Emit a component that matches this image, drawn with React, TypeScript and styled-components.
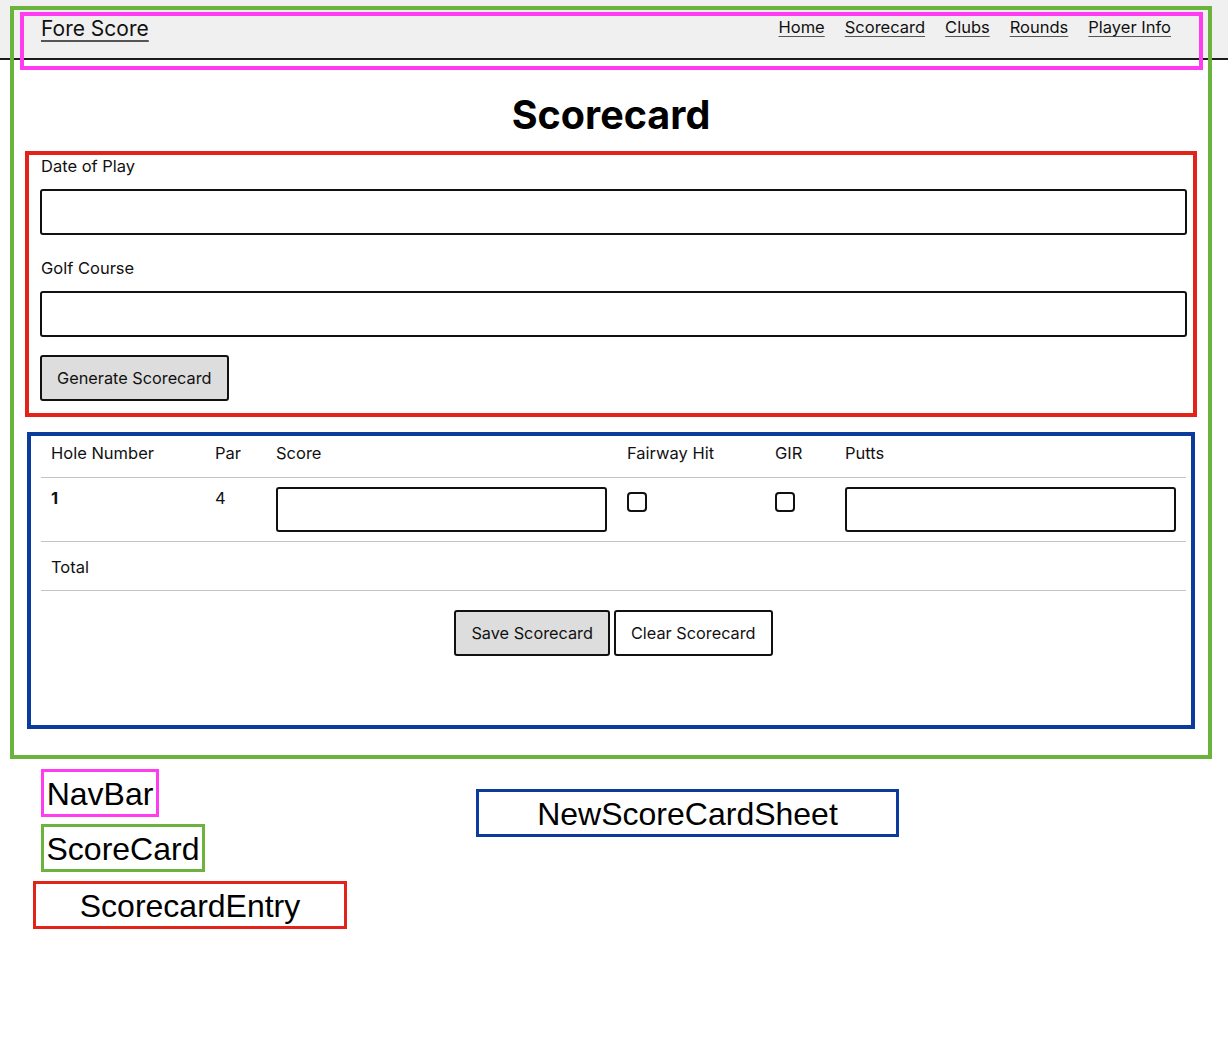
import styled, { createGlobalStyle } from 'styled-components'

const GlobalStyle = createGlobalStyle`
  * {
    box-sizing: border-box;
  }
  body {
    margin: 0;
    background: #ffffff;
    color: #111111;
    font-family: Inter, 'Noto Sans', sans-serif;
  }
`

const navLinks = ['Home', 'Scorecard', 'Clubs', 'Rounds', 'Player Info']

const columns = ['Hole Number', 'Par', 'Score', 'Fairway Hit', 'GIR', 'Putts']

const legendLeft = [
  { name: 'NavBar', color: '#ff3cf2', width: 118, indent: 41, top: 0 },
  { name: 'ScoreCard', color: '#6cb33e', width: 164, indent: 41, top: 7 },
  { name: 'ScorecardEntry', color: '#e2231a', width: 314, indent: 33, top: 9 }
]

function NavBar() {
  return (
    <Nav>
      <Brand href="#">Fore Score</Brand>
      <NavLinks>
        {navLinks.map((link) => (
          <NavLink key={link} href="#">
            {link}
          </NavLink>
        ))}
      </NavLinks>
    </Nav>
  )
}

function ScorecardEntry() {
  return (
    <EntryForm>
      <Label htmlFor="date">Date of Play</Label>
      <TextInput id="date" />
      <Label htmlFor="course" $gap={22}>
        Golf Course
      </Label>
      <TextInput id="course" />
      <ActionButton $filled type="button" $top={18}>
        Generate Scorecard
      </ActionButton>
    </EntryForm>
  )
}

function NewScoreCardSheet() {
  return (
    <Sheet>
      <HeaderRow>
        {columns.map((col) => (
          <HeadCell key={col}>{col}</HeadCell>
        ))}
      </HeaderRow>
      <BodyRow>
        <Cell $bold>1</Cell>
        <Cell>4</Cell>
        <InputCell>
          <CellInput />
        </InputCell>
        <CheckCell>
          <Check type="checkbox" />
        </CheckCell>
        <CheckCell>
          <Check type="checkbox" />
        </CheckCell>
        <InputCell>
          <CellInput />
        </InputCell>
      </BodyRow>
      <TotalRow>
        <Cell $pad={12}>Total</Cell>
      </TotalRow>
      <Actions>
        <ActionButton $filled type="button">
          Save Scorecard
        </ActionButton>
        <ActionButton type="button">Clear Scorecard</ActionButton>
      </Actions>
    </Sheet>
  )
}

export default function App() {
  return (
    <Page>
      <GlobalStyle />
      <NavBar />
      <Main>
        <Title>Scorecard</Title>
        <ScorecardEntry />
        <NewScoreCardSheet />
      </Main>
      <Legend>
        <LegendColumn>
          {legendLeft.map((tag) => (
            <LegendTag
              key={tag.name}
              $color={tag.color}
              $width={tag.width}
              $indent={tag.indent}
              $top={tag.top}
            >
              {tag.name}
            </LegendTag>
          ))}
        </LegendColumn>
        <LegendTag $color="#0b3c9d" $width={423} $indent={129} $top={20}>
          NewScoreCardSheet
        </LegendTag>
      </Legend>
      <Frame $color="#6cb33e" style={{ left: 10, top: 6, width: 1202, height: 753 }} />
      <Frame $color="#ff3cf2" style={{ left: 20, top: 12, width: 1183, height: 58 }} />
    </Page>
  )
}

const Page = styled.div`
  position: relative;
  width: 1228px;
  min-height: 1047px;
`

const Nav = styled.nav`
  height: 60px;
  background: #f0f0f0;
  border-bottom: 2px solid #1c1c1c;
  display: flex;
  justify-content: space-between;
  align-items: flex-start;
  padding: 13px 57px 0 41px;
`

const Brand = styled.a`
  padding-top: 2px;
  font-size: 21px;
  line-height: 28px;
  color: #111;
  text-decoration: underline;
  text-decoration-color: #555;
  text-underline-offset: 4px;
`

const NavLinks = styled.div`
  display: flex;
  gap: 20px;
  padding-top: 1px;
`

const NavLink = styled.a`
  font-size: 16.5px;
  line-height: 26px;
  color: #111;
  text-decoration: underline;
  text-decoration-color: #555;
  text-underline-offset: 3px;
`

const Main = styled.main`
  padding: 0 31px 0 25px;
`

const Title = styled.h1`
  margin: 31px 0 12px;
  font-size: 39.5px;
  line-height: 48px;
  font-weight: 700;
  color: #000;
  text-align: center;
`

const EntryForm = styled.form`
  display: flex;
  flex-direction: column;
  align-items: flex-start;
  border: 4px solid #e2231a;
  padding: 0 6px 12px 11px;
`

const Label = styled.label<{ $gap?: number }>`
  margin-top: ${({ $gap }) => $gap ?? 0}px;
  padding-left: 1px;
  font-size: 16.5px;
  line-height: 22px;
`

const TextInput = styled.input`
  width: 100%;
  height: 46px;
  margin-top: 12px;
  border: 2px solid #111;
  border-radius: 3px;
  background: #fff;
`

const ActionButton = styled.button<{ $filled?: boolean; $top?: number }>`
  height: 46px;
  margin-top: ${({ $top }) => $top ?? 0}px;
  padding: 0 15px;
  border: 2px solid #111;
  border-radius: 3px;
  background: ${({ $filled }) => ($filled ? '#dddddd' : '#ffffff')};
  color: #111;
  font-family: Inter, 'Noto Sans', sans-serif;
  font-size: 16.3px;
`

const Sheet = styled.section`
  margin: 15px 2px 0;
  border: 4px solid #0b3c9d;
  padding: 0 5px 69px 10px;
`

const gridColumns = '164px 61px 351px 148px 70px 351px'

const HeaderRow = styled.div`
  display: grid;
  grid-template-columns: ${gridColumns};
  border-bottom: 1px solid #c4c4c4;
`

const HeadCell = styled.div`
  padding: 5px 10px 12px;
  font-size: 16.5px;
  line-height: 24px;
`

const BodyRow = styled.div`
  display: grid;
  grid-template-columns: ${gridColumns};
  align-items: start;
  border-bottom: 1px solid #c4c4c4;
`

const TotalRow = styled.div`
  border-bottom: 1px solid #c4c4c4;
`

const Cell = styled.div<{ $bold?: boolean; $pad?: number }>`
  padding: ${({ $pad }) => ($pad ?? 7) + 1}px 10px ${({ $pad }) => ($pad ?? 7) - 1}px;
  font-size: 16.5px;
  line-height: 24px;
  font-weight: ${({ $bold }) => ($bold ? 700 : 400)};
`

const InputCell = styled.div`
  padding: 9px 10px;
`

const CellInput = styled.input`
  display: block;
  width: 100%;
  height: 45px;
  border: 2px solid #111;
  border-radius: 3px;
  background: #fff;
`

const CheckCell = styled.div`
  padding: 14px 10px;
`

const Check = styled.input`
  appearance: none;
  display: block;
  width: 20px;
  height: 20px;
  margin: 0;
  border: 2px solid #111;
  border-radius: 4px;
  background: #fff;
`

const Actions = styled.div`
  display: flex;
  justify-content: center;
  gap: 4px;
  margin-top: 19px;
`

const Legend = styled.div`
  display: flex;
  align-items: flex-start;
  margin-top: 40px;
`

const LegendColumn = styled.div`
  display: flex;
  flex-direction: column;
`

const LegendTag = styled.div<{ $color: string; $width: number; $indent: number; $top?: number }>`
  width: ${({ $width }) => $width}px;
  height: 48px;
  margin-left: ${({ $indent }) => $indent}px;
  margin-top: ${({ $top }) => $top ?? 0}px;
  border: 3px solid ${({ $color }) => $color};
  display: flex;
  align-items: center;
  justify-content: center;
  padding-top: 2px;
  font-family: 'Liberation Sans', Arial, sans-serif;
  font-size: 32px;
  color: #000;
`

const Frame = styled.div<{ $color: string }>`
  position: absolute;
  border: 4px solid ${({ $color }) => $color};
  pointer-events: none;
`
